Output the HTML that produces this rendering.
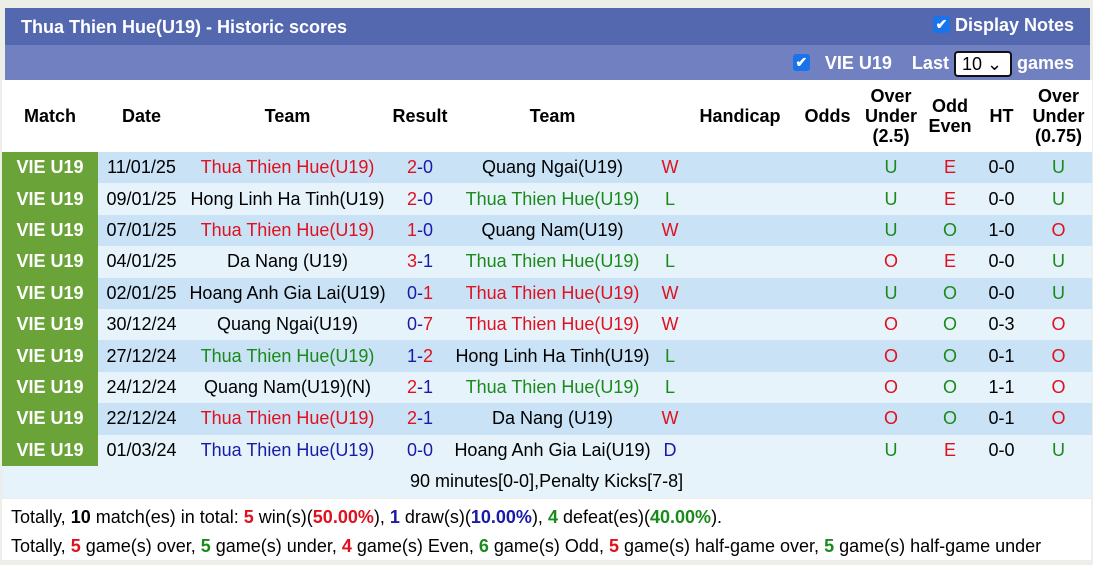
<!DOCTYPE html>
<html><head><style>
body{margin:0;background:#eeeee8;font-family:"Liberation Sans",Arial,sans-serif;width:1093px;height:565px;overflow:hidden;position:relative}
.t1{position:absolute;left:5px;top:8px;width:1085px;height:37px;background:#5468b0;color:#fff;font-weight:bold;font-size:18px}
.t2{position:absolute;left:5px;top:45px;width:1085px;height:35px;background:#7080c0;color:#fff;font-weight:bold;font-size:18px}
.cb{display:inline-block;width:17px;height:17px;background:#1a73e8;border-radius:3px;color:#fff;font-size:14px;line-height:17px;text-align:center;vertical-align:2px}
table{position:absolute;left:2px;top:80px;border-collapse:collapse;table-layout:fixed;width:1090px;font-size:18px}
td{text-align:center;padding:0;white-space:nowrap;height:31.4px}
th{height:72px;background:#fff;font-size:18px;line-height:20px;padding:0}
tr.a td{background:#c9e2f5}tr.b td{background:#e6f3fb}
td.m{background:#6aa337!important;color:#fff;font-weight:bold;font-size:18px}
.r{color:#e0101e}.g{color:#1a8a1a}.bl{color:#1a1aa8}
.sum{position:absolute;left:2px;top:499px;width:1089px;height:61px;background:#fff;font-size:18px}
.sum div{position:absolute;left:9px;white-space:nowrap}
.sum b{font-weight:bold}
</style></head><body>
<div class="t1"><span style="position:absolute;left:16px;top:9px">Thua Thien Hue(U19) - Historic scores</span><span style="position:absolute;right:16px;top:7px"><span class="cb">✔</span> Display Notes</span></div>
<div class="t2"><span style="position:absolute;right:16px;top:6px"><span class="cb">✔</span>&nbsp;&nbsp; VIE U19 &nbsp;&nbsp; Last <span style="display:inline-block;width:58px;height:26px;border:2px solid #111;border-radius:4px;background:#fff;color:#000;font-weight:normal;box-sizing:border-box;line-height:22px;text-align:left;padding-left:6px;vertical-align:-1px">10 ⌄</span> games</span></div>
<table>
<colgroup><col style="width:96px"><col style="width:87px"><col style="width:205px"><col style="width:60px"><col style="width:205px"><col style="width:30px"><col style="width:110px"><col style="width:65px"><col style="width:62px"><col style="width:56px"><col style="width:47px"><col style="width:67px"></colgroup>
<tr><th>Match</th><th>Date</th><th>Team</th><th>Result</th><th>Team</th><th></th><th>Handicap</th><th>Odds</th><th>Over<br>Under<br>(2.5)</th><th>Odd<br>Even</th><th>HT</th><th>Over<br>Under<br>(0.75)</th></tr>
<tr class="a"><td class="m">VIE U19</td><td>11/01/25</td><td class="r">Thua Thien Hue(U19)</td><td><span class="r">2</span><span class="bl">-0</span></td><td>Quang Ngai(U19)</td><td class="r">W</td><td></td><td></td><td class="g">U</td><td class="r">E</td><td>0-0</td><td class="g">U</td></tr>
<tr class="b"><td class="m">VIE U19</td><td>09/01/25</td><td>Hong Linh Ha Tinh(U19)</td><td><span class="r">2</span><span class="bl">-0</span></td><td class="g">Thua Thien Hue(U19)</td><td class="g">L</td><td></td><td></td><td class="g">U</td><td class="r">E</td><td>0-0</td><td class="g">U</td></tr>
<tr class="a"><td class="m">VIE U19</td><td>07/01/25</td><td class="r">Thua Thien Hue(U19)</td><td><span class="r">1</span><span class="bl">-0</span></td><td>Quang Nam(U19)</td><td class="r">W</td><td></td><td></td><td class="g">U</td><td class="g">O</td><td>1-0</td><td class="r">O</td></tr>
<tr class="b"><td class="m">VIE U19</td><td>04/01/25</td><td>Da Nang (U19)</td><td><span class="r">3</span><span class="bl">-1</span></td><td class="g">Thua Thien Hue(U19)</td><td class="g">L</td><td></td><td></td><td class="r">O</td><td class="r">E</td><td>0-0</td><td class="g">U</td></tr>
<tr class="a"><td class="m">VIE U19</td><td>02/01/25</td><td>Hoang Anh Gia Lai(U19)</td><td><span class="bl">0-</span><span class="r">1</span></td><td class="r">Thua Thien Hue(U19)</td><td class="r">W</td><td></td><td></td><td class="g">U</td><td class="g">O</td><td>0-0</td><td class="g">U</td></tr>
<tr class="b"><td class="m">VIE U19</td><td>30/12/24</td><td>Quang Ngai(U19)</td><td><span class="bl">0-</span><span class="r">7</span></td><td class="r">Thua Thien Hue(U19)</td><td class="r">W</td><td></td><td></td><td class="r">O</td><td class="g">O</td><td>0-3</td><td class="r">O</td></tr>
<tr class="a"><td class="m">VIE U19</td><td>27/12/24</td><td class="g">Thua Thien Hue(U19)</td><td><span class="bl">1-</span><span class="r">2</span></td><td>Hong Linh Ha Tinh(U19)</td><td class="g">L</td><td></td><td></td><td class="r">O</td><td class="g">O</td><td>0-1</td><td class="r">O</td></tr>
<tr class="b"><td class="m">VIE U19</td><td>24/12/24</td><td>Quang Nam(U19)(N)</td><td><span class="r">2</span><span class="bl">-1</span></td><td class="g">Thua Thien Hue(U19)</td><td class="g">L</td><td></td><td></td><td class="r">O</td><td class="g">O</td><td>1-1</td><td class="r">O</td></tr>
<tr class="a"><td class="m">VIE U19</td><td>22/12/24</td><td class="r">Thua Thien Hue(U19)</td><td><span class="r">2</span><span class="bl">-1</span></td><td>Da Nang (U19)</td><td class="r">W</td><td></td><td></td><td class="r">O</td><td class="g">O</td><td>0-1</td><td class="r">O</td></tr>
<tr class="b"><td class="m">VIE U19</td><td>01/03/24</td><td class="bl">Thua Thien Hue(U19)</td><td class="bl">0-0</td><td>Hoang Anh Gia Lai(U19)</td><td class="bl">D</td><td></td><td></td><td class="g">U</td><td class="r">E</td><td>0-0</td><td class="g">U</td></tr>
<tr class="b"><td colspan="12" style="text-align:left;padding-left:408px;height:32px">90 minutes[0-0],Penalty Kicks[7-8]</td></tr>
</table>
<div class="sum">
<div style="top:8px">Totally, <b>10</b> match(es) in total: <b class="r">5</b> win(s)(<b class="r">50.00%</b>), <b class="bl">1</b> draw(s)(<b class="bl">10.00%</b>), <b class="g">4</b> defeat(es)(<b class="g">40.00%</b>).</div>
<div style="top:37px">Totally, <b class="r">5</b> game(s) over, <b class="g">5</b> game(s) under, <b class="r">4</b> game(s) Even, <b class="g">6</b> game(s) Odd, <b class="r">5</b> game(s) half-game over, <b class="g">5</b> game(s) half-game under</div>
</div>
</body></html>
